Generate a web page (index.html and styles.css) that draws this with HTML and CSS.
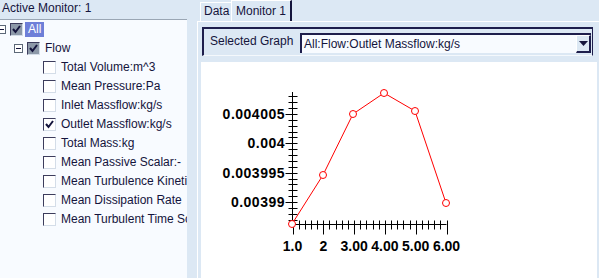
FILE: index.html
```html
<!DOCTYPE html>
<html lang="en">
<head>
    <meta charset="UTF-8">
    <title>Monitor</title>
    <link rel="stylesheet" href="styles.css">
</head>
<body>
    <div class="window">
        <!-- left: monitor tree -->
        <aside class="monitor">
            <div class="monitor-title">Active Monitor: 1</div>
            <div class="tree">
                <div class="row level-0">
                    <span class="expander"></span>
                    <span class="check partial"><svg viewBox="0 0 11 11"><polyline points="2,5 4.5,8 9,2"/></svg></span>
                    <span class="label selected">All</span>
                </div>
                <div class="row level-1">
                    <span class="expander"></span>
                    <span class="check partial"><svg viewBox="0 0 11 11"><polyline points="2,5 4.5,8 9,2"/></svg></span>
                    <span class="label">Flow</span>
                </div>
                <div class="row leaf"><span class="check"></span><span class="label">Total Volume:m^3</span></div>
                <div class="row leaf"><span class="check"></span><span class="label">Mean Pressure:Pa</span></div>
                <div class="row leaf"><span class="check"></span><span class="label">Inlet Massflow:kg/s</span></div>
                <div class="row leaf"><span class="check"><svg viewBox="0 0 11 11"><polyline points="2,5 4.5,8 9,2"/></svg></span><span class="label">Outlet Massflow:kg/s</span></div>
                <div class="row leaf"><span class="check"></span><span class="label">Total Mass:kg</span></div>
                <div class="row leaf"><span class="check"></span><span class="label">Mean Passive Scalar:-</span></div>
                <div class="row leaf"><span class="check"></span><span class="label">Mean Turbulence Kinetic Energy</span></div>
                <div class="row leaf"><span class="check"></span><span class="label">Mean Dissipation Rate</span></div>
                <div class="row leaf"><span class="check"></span><span class="label">Mean Turbulent Time Scale</span></div>
            </div>
        </aside>

        <div class="divider"></div>

        <!-- right: tabs + graph -->
        <section class="graphs">
            <div class="tabs">
                <div class="tab">Data</div>
                <div class="tab active">Monitor 1</div>
            </div>
            <div class="tab-body">
                <div class="graph-select">
                    <span class="graph-select-label">Selected Graph</span>
                    <div class="combo">
                        <span class="combo-text">All:Flow:Outlet Massflow:kg/s</span>
                        <span class="combo-button"><svg width="9" height="5" viewBox="0 0 9 5"><polygon points="0,0 9,0 4.5,5"/></svg></span>
                    </div>
                </div>
                <div class="chart">
                    <svg id="plot" width="396" height="216"></svg>
                </div>
            </div>
        </section>
    </div>

    <script>
        // build the plot: axes, ticks, labels and the data line
        const svg = document.getElementById('plot');
        const NS = 'http://www.w3.org/2000/svg';

        function add(tag, attrs, text) {
            const el = document.createElementNS(NS, tag);
            for (const k in attrs) el.setAttribute(k, attrs[k]);
            if (text) el.textContent = text;
            svg.appendChild(el);
            return el;
        }

        const x0 = 91.5, y0 = 162.5;
        const xStep = 30.8;
        const yMajor = [52, 81.3, 110.6, 140];

        // x axis
        add('line', { x1: x0, y1: y0, x2: x0 + 5 * xStep, y2: y0, class: 'axis' });
        for (let i = 0; i <= 25; i++) {
            const x = Math.round(x0 + i * xStep / 5) + 0.5;
            const major = i % 5 === 0;
            add('line', { x1: x, y1: y0 - 4, x2: x, y2: y0 + (major ? 10 : 5), class: 'axis' });
        }
        const xLabels = ['1.0', '2', '3.00', '4.00', '5.00', '6.00'];
        xLabels.forEach((t, i) => {
            add('text', { x: x0 + i * xStep, y: 189, 'text-anchor': 'middle', class: 'tick-label' }, t);
        });

        // y axis
        add('line', { x1: x0, y1: 30, x2: x0, y2: y0, class: 'axis' });
        const yStep = (140 - 52) / 15;
        for (let k = -4; k <= 19; k++) {
            const y = Math.round(140 - k * yStep) + 0.5;
            if (y < 30 || y > y0) continue;
            const major = k % 5 === 0 && k >= 0;
            add('line', { x1: x0 - (major ? 7 : 4), y1: y, x2: x0 + 5, y2: y, class: 'axis' });
        }
        const yLabels = ['0.004005', '0.004', '0.003995', '0.00399'];
        yLabels.forEach((t, i) => {
            add('text', { x: 84, y: yMajor[i] + 5, 'text-anchor': 'end', class: 'tick-label y-label' }, t);
        });

        // data
        const pts = [[91, 162], [122, 113], [152, 52], [183, 31], [214, 49], [245, 141]];
        add('polyline', { points: pts.map(p => p.join(',')).join(' '), class: 'series' });
        pts.forEach(p => add('circle', { cx: p[0], cy: p[1], r: 3.5, class: 'marker' }));
    </script>
</body>
</html>
```

FILE: styles.css
```css
* {
    margin: 0;
    padding: 0;
    box-sizing: border-box;
}

body {
    background-color: #dce8f4;
    font-family: "Liberation Sans", Arial, sans-serif;
    font-size: 12px;
    color: #14143c;
    width: 599px;
    height: 278px;
    overflow: hidden;
}

.window {
    display: flex;
    height: 278px;
}

/* left monitor tree */
.monitor {
    width: 187px;
    display: flex;
    flex-direction: column;
}

.monitor-title {
    height: 19px;
    line-height: 16px;
    padding-left: 2px;
}

.tree {
    flex: 1;
    background-color: #f8fbff;
    border-top: 1px solid #9aa6b4;
    overflow: hidden;
}

.row {
    height: 19px;
    display: flex;
    align-items: center;
    white-space: nowrap;
}

.level-0 {
    margin-left: -3px;
}

.level-1 {
    padding-left: 14px;
}

.leaf {
    padding-left: 43px;
}

.expander {
    width: 9px;
    height: 9px;
    border: 1px solid #5c6878;
    background-color: #ffffff;
    margin-right: 4px;
    position: relative;
    flex: none;
}

.expander::after {
    content: "";
    position: absolute;
    left: 1px;
    top: 3px;
    width: 5px;
    height: 1px;
    background-color: #14143c;
}

.check {
    width: 13px;
    height: 13px;
    flex: none;
    background-color: #ffffff;
    border-top: 1px solid #3c3c5c;
    border-left: 1px solid #3c3c5c;
    border-right: 1px solid #d4dde8;
    border-bottom: 1px solid #d4dde8;
    display: flex;
}

.check svg {
    width: 11px;
    height: 11px;
}

.check polyline {
    fill: none;
    stroke: #14143c;
    stroke-width: 2;
}

.check.partial {
    background-color: #8c98a8;
}

.label {
    margin-left: 2px;
    padding: 0 3px;
    line-height: 15px;
}

.label.selected {
    background-color: #6e7fd8;
    color: #ffffff;
}

.divider {
    width: 10px;
}

/* right side: tabs and graph */
.graphs {
    flex: 1;
    display: flex;
    flex-direction: column;
}

.tabs {
    height: 21px;
    display: flex;
    align-items: flex-end;
    padding-left: 3px;
}

.tab {
    height: 19px;
    line-height: 17px;
    padding: 0 3px;
    border-top: 1px solid #ffffff;
    border-left: 1px solid #ffffff;
    white-space: nowrap;
    width: 31px;
}

.tab.active {
    height: 21px;
    line-height: 20px;
    width: auto;
    padding: 0 4px 0 4px;
    border-right: 2px solid #14143c;
}

.tab-body {
    flex: 1;
    border-top: 1px solid #ffffff;
    border-left: 1px solid #ffffff;
    display: flex;
    flex-direction: column;
}

.graph-select {
    margin: 5px 6px 0 4px;
    height: 29px;
    border-top: 2px solid #1e1e4c;
    border-left: 2px solid #1e1e4c;
    border-right: 1px solid #1e1e4c;
    border-bottom: 1px solid #f4f8fc;
    display: flex;
    align-items: center;
    padding-left: 6px;
}

.graph-select-label {
    width: 90px;
    margin-top: -3px;
    white-space: nowrap;
}

.combo {
    width: 291px;
    height: 20px;
    margin-top: 1px;
    background-color: #f8fbff;
    border-top: 2px solid #1e1e4c;
    border-left: 2px solid #1e1e4c;
    display: flex;
    align-items: center;
    justify-content: space-between;
}

.combo-text {
    padding-left: 2px;
    white-space: nowrap;
}

.combo-button {
    width: 15px;
    height: 18px;
    background-color: #dce8f4;
    border-right: 2px solid #1e1e4c;
    border-bottom: 2px solid #1e1e4c;
    border-top: 1px solid #ffffff;
    border-left: 1px solid #ffffff;
    display: flex;
    align-items: center;
    justify-content: center;
}

.combo-button polygon {
    fill: #14143c;
}

.chart {
    margin: 6px 2px 0 3px;
    flex: 1;
    background-color: #ffffff;
}

.chart svg {
    display: block;
}

.axis {
    stroke: #000000;
    stroke-width: 1;
}

.tick-label {
    font-family: "Liberation Sans", Arial, sans-serif;
    font-weight: bold;
    font-size: 14px;
    fill: #000000;
}

.y-label {
    letter-spacing: 0.5px;
}

.series {
    fill: none;
    stroke: #ff0000;
    stroke-width: 1;
}

.marker {
    fill: #ffffff;
    stroke: #ff0000;
    stroke-width: 1;
}
```
